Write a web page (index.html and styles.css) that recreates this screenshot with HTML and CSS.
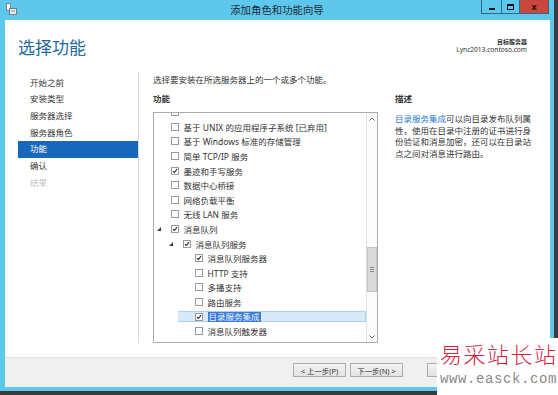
FILE: index.html
```html
<!DOCTYPE html>
<html lang="zh-CN">
<head>
    <meta charset="UTF-8">
    <title>添加角色和功能向导</title>
    <link rel="stylesheet" href="styles.css">
</head>
<body>

    <div class="shell">
        <div class="window">
            <div class="titlebar">
                <svg class="app-icon" width="11" height="12" viewBox="0 0 11 12">
                    <rect x="0.5" y="0.5" width="4" height="7" fill="#f4f4f4" stroke="#7a8a92"/>
                    <rect x="3.5" y="5.5" width="7" height="6" fill="#e8e8e8" stroke="#6f7f88"/>
                    <line x1="5" y1="8" x2="9" y2="8" stroke="#8a9aa2"/>
                </svg>
                <div class="title">添加角色和功能向导</div>
                <div class="controls">
                    <span class="ctl min"><i></i></span>
                    <span class="ctl max"><i></i></span>
                    <span class="ctl close">x</span>
                </div>
            </div>

            <div class="client">
                <div class="header">
                    <h1>选择功能</h1>
                    <div class="target">
                        <div class="target-label">目标服务器</div>
                        <div>Lync2013.contoso.com</div>
                    </div>
                </div>

                <div class="main">
                    <ul class="nav">
                        <li>开始之前</li>
                        <li>安装类型</li>
                        <li>服务器选择</li>
                        <li>服务器角色</li>
                        <li class="active">功能</li>
                        <li>确认</li>
                        <li class="disabled">结果</li>
                    </ul>

                    <div class="content">
                        <p class="intro">选择要安装在所选服务器上的一个或多个功能。</p>
                        <div class="columns">
                            <div class="features">
                                <div class="label">功能</div>
                                <div class="listbox">
                                    <div class="tree">
                                        <div class="rows">
                                            <div class="row"><span class="exp"></span><span class="cb"></span></div>
                                            <div class="row"><span class="exp"></span><span class="cb"></span><span class="txt">基于 UNIX 的应用程序子系统 [已弃用]</span></div>
                                            <div class="row"><span class="exp"></span><span class="cb"></span><span class="txt">基于 Windows 标准的存储管理</span></div>
                                            <div class="row"><span class="exp"></span><span class="cb"></span><span class="txt">简单 TCP/IP 服务</span></div>
                                            <div class="row"><span class="exp"></span><span class="cb on"><svg viewBox="0 0 8 8"><path d="M1.3 4.2 L3.2 6 L6.7 1.6"/></svg></span><span class="txt">墨迹和手写服务</span></div>
                                            <div class="row"><span class="exp"></span><span class="cb"></span><span class="txt">数据中心桥接</span></div>
                                            <div class="row"><span class="exp"></span><span class="cb"></span><span class="txt">网络负载平衡</span></div>
                                            <div class="row"><span class="exp"></span><span class="cb"></span><span class="txt">无线 LAN 服务</span></div>
                                            <div class="row"><span class="exp open"></span><span class="cb on"><svg viewBox="0 0 8 8"><path d="M1.3 4.2 L3.2 6 L6.7 1.6"/></svg></span><span class="txt">消息队列</span></div>
                                            <div class="row l2"><span class="exp open"></span><span class="cb on"><svg viewBox="0 0 8 8"><path d="M1.3 4.2 L3.2 6 L6.7 1.6"/></svg></span><span class="txt">消息队列服务</span></div>
                                            <div class="row l3"><span class="exp"></span><span class="cb on"><svg viewBox="0 0 8 8"><path d="M1.3 4.2 L3.2 6 L6.7 1.6"/></svg></span><span class="txt">消息队列服务器</span></div>
                                            <div class="row l3"><span class="exp"></span><span class="cb"></span><span class="txt">HTTP 支持</span></div>
                                            <div class="row l3"><span class="exp"></span><span class="cb"></span><span class="txt">多播支持</span></div>
                                            <div class="row l3"><span class="exp"></span><span class="cb"></span><span class="txt">路由服务</span></div>
                                            <div class="row l3 sel"><span class="exp"></span><span class="cb on"><svg viewBox="0 0 8 8"><path d="M1.3 4.2 L3.2 6 L6.7 1.6"/></svg></span><span class="txt mark">目录服务集成</span></div>
                                            <div class="row l3"><span class="exp"></span><span class="cb"></span><span class="txt">消息队列触发器</span></div>
                                        </div>
                                    </div>
                                    <div class="scrollbar">
                                        <div class="arrow"><svg width="6" height="4" viewBox="0 0 6 4"><polyline points="0.5,3.5 3,1 5.5,3.5"/></svg></div>
                                        <div class="track">
                                            <div class="thumb"><i></i><i></i><i></i></div>
                                        </div>
                                        <div class="arrow"><svg width="6" height="4" viewBox="0 0 6 4"><polyline points="0.5,0.5 3,3 5.5,0.5"/></svg></div>
                                    </div>
                                </div>
                            </div>

                            <div class="desc">
                                <div class="label">描述</div>
                                <p><span class="link">目录服务集成</span>可以向目录发布队列属性，使用在目录中注册的证书进行身份验证和消息加密，还可以在目录站点之间对消息进行路由。</p>
                            </div>
                        </div>
                    </div>
                </div>

                <div class="footer">
                    <button>&lt; 上一步(P)</button>
                    <button>下一步(N) &gt;</button>
                    <button class="wide-gap"></button>
                </div>
            </div>
        </div>

        <div class="watermark">
            <div class="wm-name">易采站长站</div>
            <div class="wm-url">www.easck.com</div>
        </div>
    </div>

</body>
</html>
```

FILE: styles.css
```css
* {
    box-sizing: border-box;
}
body {
    margin: 0;
    width: 558px;
    height: 395px;
    overflow: hidden;
    font-family: "Noto Sans", "Noto Sans CJK SC", sans-serif;
    font-size: 8.5px;
    color: #333;
    background: #fff;
}
.shell {
    position: relative;
    width: 558px;
    height: 395px;
    background: #3a3a3a;
}
.window {
    width: 554px;
    height: 391px;
    background: #5ec8ec;
    display: flex;
    flex-direction: column;
}

/* title bar */
.titlebar {
    height: 20px;
    flex: none;
    display: grid;
    grid-template-columns: 1fr auto 1fr;
    align-items: start;
}
.app-icon {
    margin: 3px 0 0 6px;
}
.title {
    font-size: 10.4px;
    line-height: 20px;
    color: #1d2c34;
}
.controls {
    justify-self: end;
    display: flex;
    margin-right: 5px;
    height: 14px;
}
.ctl {
    display: flex;
    align-items: center;
    justify-content: center;
    height: 14px;
    border: 1px solid #2d6a88;
    border-top: none;
}
.min {
    width: 20px;
    border-right: none;
}
.min i {
    width: 6px;
    height: 2px;
    background: #111;
    margin-top: 4px;
}
.max {
    width: 19px;
}
.max i {
    width: 7px;
    height: 6px;
    border: 1px solid #111;
    border-top-width: 2px;
}
.close {
    width: 29px;
    background: #c9473c;
    border-left: none;
    color: #2a0d0d;
    font-size: 9px;
    font-weight: bold;
    line-height: 1;
}

/* client area */
.client {
    flex: 1;
    margin: 0 4px 4px 5px;
    background: #fff;
    display: flex;
    flex-direction: column;
}
.header {
    height: 52px;
    flex: none;
    display: flex;
    justify-content: space-between;
    padding: 18px 23px 0 13px;
}
.header h1 {
    margin: 0;
    font-size: 17px;
    font-weight: normal;
    line-height: 20px;
    color: #22699b;
}
.target {
    text-align: right;
    font-size: 6.6px;
    line-height: 7px;
    padding-top: 0.5px;
    color: #333;
}
.target-label {
    font-size: 6px;
    font-weight: bold;
}

.main {
    flex: 1;
    display: flex;
    padding: 0 0 14px 13px;
}
.nav {
    width: 121px;
    margin: 0;
    padding: 2.6px 0 0;
    list-style: none;
    border-right: 1px solid #dcdcdc;
}
.nav li {
    height: 16.7px;
    line-height: 16.7px;
    padding-left: 12px;
}
.nav li.active {
    background: #1767bd;
    color: #fff;
}
.nav li.disabled {
    color: #c4c4c4;
}

.content {
    flex: 1;
    padding: 2px 0 0 14px;
}
.intro {
    margin: 0;
    line-height: 12px;
}
.columns {
    display: flex;
    margin-top: 7px;
}
.features {
    width: 225px;
}
.label {
    font-weight: bold;
    line-height: 12px;
    margin-bottom: 7px;
}

/* feature tree */
.listbox {
    height: 231px;
    border: 1px solid #acacac;
    display: flex;
    overflow: hidden;
}
.tree {
    flex: 1;
    overflow: hidden;
}
.rows {
    margin-top: -8px;
}
.row {
    display: flex;
    align-items: center;
    height: 14.6px;
    white-space: nowrap;
}
.row.l2 {
    margin-left: 12px;
}
.row.l3 {
    margin-left: 24px;
}
.row.sel {
    height: 11.6px;
    margin-top: 1.5px;
    margin-bottom: 1.5px;
    background: #d8eaf9;
    border: 1px solid #a9d0f1;
    border-left: none;
}
.exp {
    width: 17px;
    flex: none;
    display: flex;
    align-items: center;
    padding-left: 3px;
}
.exp.open::before {
    content: "";
    width: 0;
    height: 0;
    border-left: 4px solid transparent;
    border-bottom: 4px solid #3a3a3a;
}
.cb {
    width: 8px;
    height: 8px;
    flex: none;
    border: 1px solid #9a9a9a;
    background: #fff;
    margin-right: 4.5px;
}
.cb svg {
    display: block;
    width: 6px;
    height: 6px;
}
.cb svg path {
    fill: none;
    stroke: #222;
    stroke-width: 1.4;
}
.txt.mark {
    background: #3a7bd6;
    color: #eaf2ff;
    padding: 0 1px;
    line-height: 10px;
}

.scrollbar {
    width: 11px;
    flex: none;
    display: flex;
    flex-direction: column;
    border-left: 1px solid #e2e2e2;
    background: #fbfbfb;
}
.arrow {
    height: 11px;
    display: flex;
    align-items: center;
    justify-content: center;
}
.arrow polyline {
    fill: none;
    stroke: #777;
    stroke-width: 1;
}
.track {
    flex: 1;
}
.thumb {
    margin-top: 123px;
    height: 45px;
    background: #dadada;
    border: 1px solid #c2c2c2;
    display: flex;
    flex-direction: column;
    align-items: center;
    justify-content: center;
    gap: 1px;
}
.thumb i {
    width: 4px;
    height: 1px;
    background: #8a8a8a;
}

.desc {
    margin-left: 17px;
    width: 140px;
}
.desc .label {
    margin-bottom: 8px;
}
.desc p {
    margin: 0;
    line-height: 11.6px;
}
.link {
    color: #2b7cd3;
}

/* footer buttons */
.footer {
    height: 30px;
    flex: none;
    background: #f0f0f0;
    border-top: 1px solid #e0e0e0;
    display: flex;
    justify-content: flex-end;
    align-items: flex-start;
    gap: 4px;
    padding: 5px 70px 0 0;
}
.footer button {
    width: 53px;
    height: 14px;
    padding: 0;
    font-family: inherit;
    font-size: 7.4px;
    color: #333;
    border: 1px solid #acacac;
    background: linear-gradient(#f3f3f3, #e3e3e3);
}
.footer .wide-gap {
    margin-left: 20px;
}

/* watermark */
.watermark {
    position: absolute;
    left: 437px;
    top: 338px;
    right: 0;
    bottom: 0;
    background: #fff;
    padding: 2px 0 0 3px;
}
.wm-name {
    font-family: "Noto Sans CJK SC", sans-serif;
    font-weight: 300;
    font-size: 22px;
    line-height: 26px;
    letter-spacing: 1.5px;
    color: #d3233d;
}
.wm-url {
    font-family: "Liberation Mono", monospace;
    font-size: 14px;
    line-height: 14px;
    margin-top: 6px;
    letter-spacing: 0.6px;
    color: #8a8a8a;
}
```
